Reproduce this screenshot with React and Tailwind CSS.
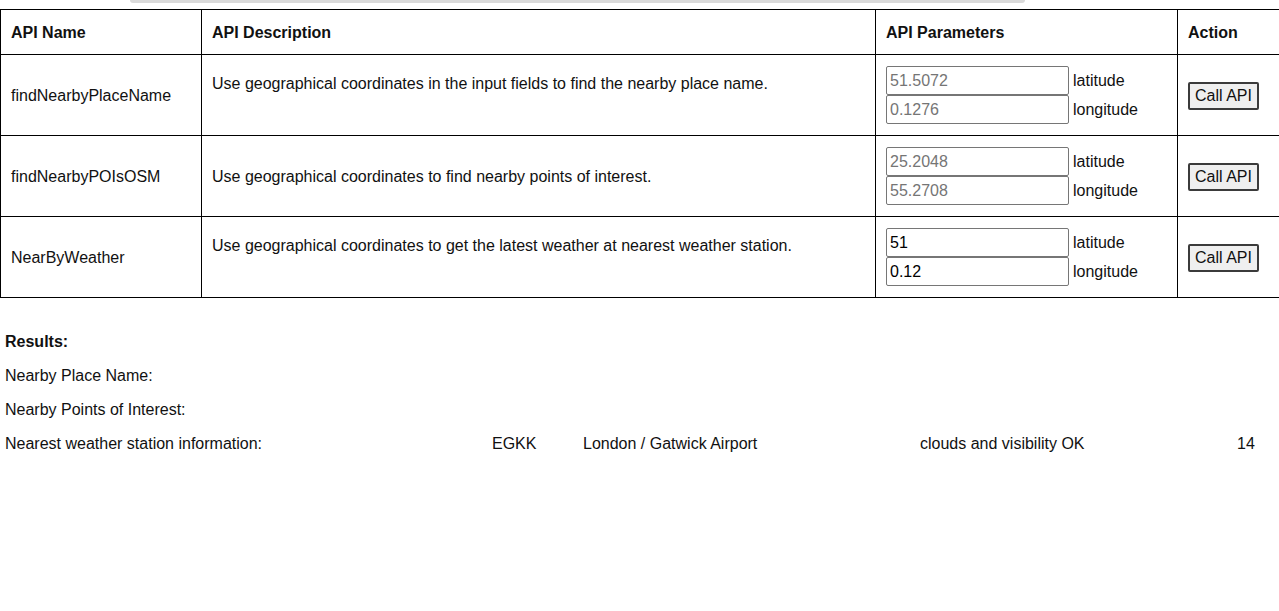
import React from 'react';

const apis = [
  {
    name: 'findNearbyPlaceName',
    desc: 'Use geographical coordinates in the input fields to find the nearby place name.',
    lat: '51.5072',
    lng: '0.1276',
    placeholder: true,
    twoLine: true,
  },
  {
    name: 'findNearbyPOIsOSM',
    desc: 'Use geographical coordinates to find nearby points of interest.',
    lat: '25.2048',
    lng: '55.2708',
    placeholder: true,
    twoLine: false,
  },
  {
    name: 'NearByWeather',
    desc: 'Use geographical coordinates to get the latest weather at nearest weather station.',
    lat: '51',
    lng: '0.12',
    placeholder: false,
    twoLine: true,
  },
];

const ParamInput = ({ value, placeholder, label }) => (
  <div className="flex items-center">
    <input
      type="text"
      readOnly
      value={placeholder ? '' : value}
      placeholder={placeholder ? value : ''}
      className="w-[183px] h-[29px] border border-[#767676] rounded-[2px] px-[3px] text-[16px] text-black placeholder:text-[#757575] bg-white outline-none"
    />
    <span className="ml-[4px] pt-[1px]">{label}</span>
  </div>
);

const App = () => {
  return (
    <div
      className="w-[1279px] h-[611px] overflow-hidden bg-white text-[#111] text-[16px]"
      style={{ fontFamily: '"Liberation Sans", Arial, sans-serif' }}
    >
      {/* scrollbar remnant at top */}
      <div className="ml-[130px] w-[895px] h-[3px] rounded-b-full bg-[#dadada]" />

      <table className="mt-[6px] w-[1290px] border-collapse table-fixed">
        <colgroup>
          <col className="w-[201px]" />
          <col className="w-[674px]" />
          <col className="w-[302px]" />
          <col className="w-[113px]" />
        </colgroup>
        <thead>
          <tr className="h-[45px]">
            <th className="border border-black text-left font-bold px-[10px] pt-[2px]">API Name</th>
            <th className="border border-black text-left font-bold px-[10px] pt-[2px]">API Description</th>
            <th className="border border-black text-left font-bold px-[10px] pt-[2px]">API Parameters</th>
            <th className="border border-black text-left font-bold px-[10px] pt-[2px]">Action</th>
          </tr>
        </thead>
        <tbody>
          {apis.map((api) => (
            <tr key={api.name} className="h-[81px]">
              <td className="border border-black px-[10px] pt-[2px] align-middle">{api.name}</td>
              <td className="border border-black px-[10px] align-middle">
                <div className="leading-[23px]">{api.desc}</div>
                {api.twoLine && <div className="h-[23px]" />}
              </td>
              <td className="border border-black px-[10px] align-middle">
                <ParamInput value={api.lat} placeholder={api.placeholder} label="latitude" />
                <ParamInput value={api.lng} placeholder={api.placeholder} label="longitude" />
              </td>
              <td className="border border-black px-[10px] pt-[1px] align-middle">
                <button className="h-[28px] px-[5px] pt-[1px] bg-[#efefef] border-2 border-[#3b3b3b] rounded-[2px] text-[16px] leading-none">
                  Call API
                </button>
              </td>
            </tr>
          ))}
        </tbody>
      </table>

      <div className="mt-[35px] px-[5px] leading-[18px]">
        <p className="font-bold mb-4">Results:</p>
        <p className="mb-4">Nearby Place Name:</p>
        <p className="mb-4">Nearby Points of Interest:</p>
        <div className="flex">
          <span className="w-[487px]">Nearest weather station information:</span>
          <span className="w-[91px]">EGKK</span>
          <span className="w-[337px]">London / Gatwick Airport</span>
          <span className="w-[317px]">clouds and visibility OK</span>
          <span>14</span>
        </div>
      </div>
    </div>
  );
};

export default App;
